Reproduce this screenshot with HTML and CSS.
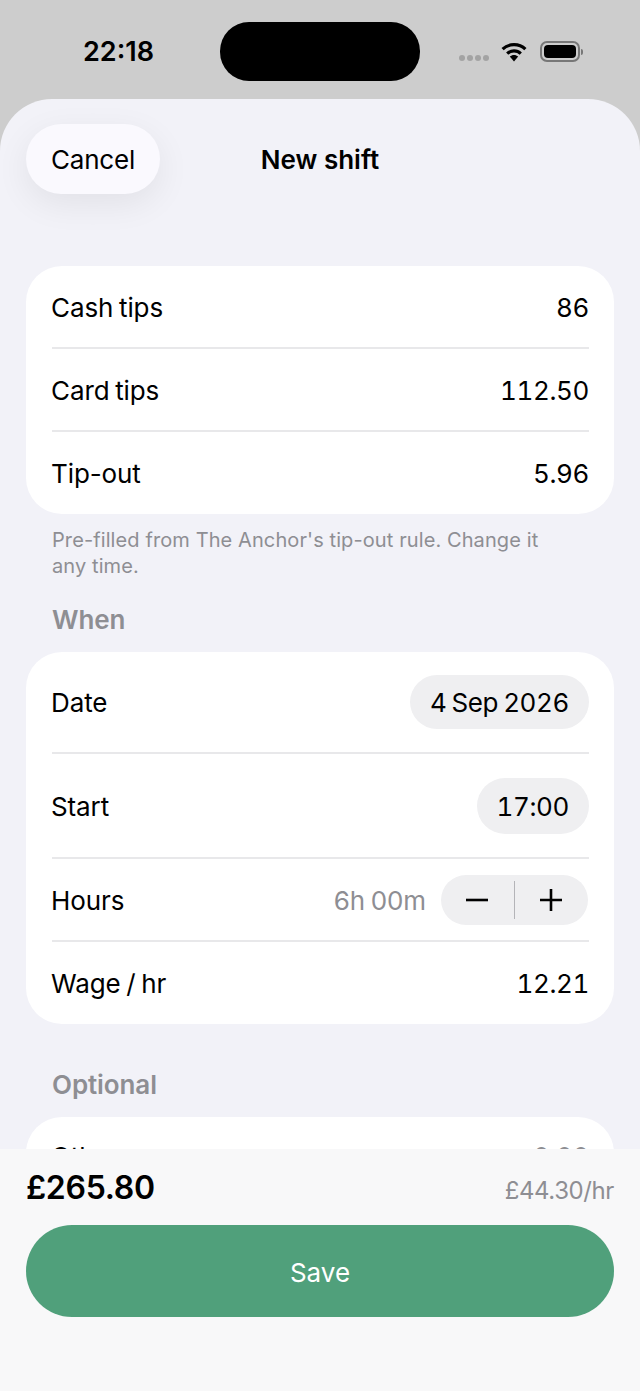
FILE: index.html
```html
<!DOCTYPE html>
<html lang="en">
<head>
    <meta charset="UTF-8">
    <meta name="viewport" content="width=device-width, initial-scale=1.0">
    <title>New shift</title>
    <link rel="stylesheet" href="styles.css">
</head>
<body>
    <div class="status-bar">
        <div class="status-time">22:18</div>
        <div class="island"></div>
        <div class="status-icons">
            <div class="signal-dots"><span></span><span></span><span></span><span></span></div>
            <svg class="wifi" width="26" height="20" viewBox="0 0 26 20">
                <path d="M1.6 7.2C7.8 1.2 18.2 1.2 24.4 7.2" fill="none" stroke="#000" stroke-width="3.2"/>
                <path d="M6.2 11.6C10 8 16 8 19.8 11.6" fill="none" stroke="#000" stroke-width="3.2"/>
                <path d="M8.8 14.6C11.2 12.4 14.8 12.4 17.2 14.6L13 19.6Z" fill="#000"/>
            </svg>
            <div class="battery"><div class="battery-fill"></div></div>
            <div class="battery-cap"></div>
        </div>
    </div>

    <div class="sheet">
        <div class="sheet-scroll">
            <div class="sheet-header">
                <button class="cancel-button">Cancel</button>
                <h1>New shift</h1>
            </div>

            <div class="card">
                <div class="row"><span class="label">Cash tips</span><span class="num">86</span></div>
                <div class="row"><span class="label">Card tips</span><span class="num">112.50</span></div>
                <div class="row"><span class="label">Tip-out</span><span class="num">5.96</span></div>
            </div>
            <p class="footnote">Pre-filled from The Anchor's tip-out rule. Change it any time.</p>

            <h2 class="section-title">When</h2>
            <div class="card">
                <div class="row row-date"><span class="label">Date</span><span class="pill pill-date num">4 Sep 2026</span></div>
                <div class="row row-start"><span class="label">Start</span><span class="pill pill-start num">17:00</span></div>
                <div class="row">
                    <span class="label">Hours</span>
                    <div class="hours-value">
                        <span class="muted">6h 00m</span>
                        <div class="stepper">
                            <svg class="stepper-side" width="73" height="50" viewBox="0 0 73 50"><path d="M25 25H47" stroke="#000" stroke-width="2.6"/></svg>
                            <div class="stepper-divider"></div>
                            <svg class="stepper-side" width="73" height="50" viewBox="0 0 73 50"><path d="M25 25H47M36 14V36" stroke="#000" stroke-width="2.6"/></svg>
                        </div>
                    </div>
                </div>
                <div class="row"><span class="label">Wage / hr</span><span class="num">12.21</span></div>
            </div>

            <h2 class="section-title section-title-optional">Optional</h2>
            <div class="card">
                <div class="row row-clipped"><span class="label">Other</span><span class="muted num">0.00</span></div>
            </div>
        </div>

        <div class="footer">
            <div class="totals">
                <span class="total">£265.80</span>
                <span class="rate">£44.30/hr</span>
            </div>
            <button class="save-button">Save</button>
        </div>
    </div>
</body>
</html>
```

FILE: styles.css
```css
* {
    margin: 0;
    padding: 0;
    box-sizing: border-box;
}

body {
    font-family: Inter, 'Liberation Sans', sans-serif;
    background: #cdcdcd;
    color: #000;
    height: 1391px;
    display: flex;
    flex-direction: column;
    overflow: hidden;
}

.status-bar {
    height: 99px;
    flex-shrink: 0;
    display: flex;
    align-items: flex-start;
    padding-top: 22px;
}

.status-time {
    width: 220px;
    padding-left: 83px;
    padding-top: 14px;
    font-size: 27px;
    font-weight: 600;
    line-height: 32px;
}

.island {
    width: 200px;
    height: 59px;
    background: #000;
    border-radius: 29px;
}

.status-icons {
    display: flex;
    align-items: center;
    padding-left: 39px;
    padding-top: 19px;
}

.signal-dots {
    display: flex;
    gap: 2px;
    margin-top: 13px;
    margin-right: 12px;
}

.signal-dots span {
    width: 6px;
    height: 6px;
    border-radius: 50%;
    background: #a3a3a3;
}

.wifi {
    margin-right: 13px;
}

.battery {
    width: 40px;
    height: 21px;
    border: 2px solid #777;
    border-radius: 7px;
    padding: 2px;
}

.battery-fill {
    height: 100%;
    background: #000;
    border-radius: 4px;
}

.battery-cap {
    width: 2px;
    height: 6px;
    margin-left: 1px;
    background: #777;
    border-radius: 0 2px 2px 0;
}

.sheet {
    flex: 1;
    min-height: 0;
    display: flex;
    flex-direction: column;
    background: #f2f2f8;
    border-radius: 52px 52px 0 0;
    overflow: hidden;
}

.sheet-scroll {
    flex: 1;
    min-height: 0;
    overflow: hidden;
    padding: 25px 26px 0;
}

.sheet-header {
    position: relative;
    height: 70px;
    margin-bottom: 72px;
    display: flex;
    align-items: center;
    justify-content: center;
}

.sheet-header h1 {
    font-size: 26px;
    font-weight: 600;
}

.cancel-button {
    position: absolute;
    left: 0;
    top: 0;
    width: 134px;
    height: 70px;
    border: none;
    border-radius: 35px;
    background: #faf9fe;
    box-shadow: 0 10px 34px rgba(0, 0, 0, 0.07);
    font-family: inherit;
    font-size: 26px;
    letter-spacing: -0.2px;
    color: #000;
}

.card {
    background: white;
    border-radius: 36px;
    padding: 0 25px 0 26px;
}

.row {
    height: 83px;
    padding-top: 2px;
    display: flex;
    align-items: center;
    justify-content: space-between;
    border-bottom: 2px solid #e8e8ea;
    font-size: 26px;
    letter-spacing: -0.1px;
    word-spacing: -1.5px;
}

.row:last-child {
    border-bottom: none;
    height: 82px;
    padding-top: 0;
}

.row-date {
    height: 102px;
    padding-top: 0;
}

.row-start {
    height: 105px;
}

/* only the tops of this row show above the footer */
.row-clipped {
    padding-bottom: 4px;
}

.label {
    margin-left: -1px;
}

.num {
    font-feature-settings: "tnum";
    letter-spacing: -0.4px;
}

.pill {
    display: flex;
    align-items: center;
    background: #efeff1;
    border-radius: 28px;
    padding: 0 20px;
}

.pill-date {
    height: 54px;
}

.pill-start {
    height: 56px;
    padding-top: 2px;
    margin-bottom: 2px;
}

.footnote {
    margin: 13px 60px 0 26px;
    font-size: 20px;
    line-height: 26px;
    letter-spacing: 0.1px;
    color: #8e8e93;
}

.section-title {
    margin: 24px 26px 0;
    height: 49px;
    font-size: 26px;
    font-weight: 600;
    line-height: 34px;
    letter-spacing: -0.1px;
    color: #8e8e93;
}

.section-title-optional {
    margin-top: 44px;
    height: 49px;
}

.hours-value {
    display: flex;
    align-items: center;
    gap: 15px;
}

.muted {
    color: #8e8e93;
}

.stepper {
    width: 147px;
    height: 50px;
    margin-right: 1px;
    margin-bottom: 2px;
    display: flex;
    align-items: center;
    background: #efeff1;
    border-radius: 25px;
}

.stepper-divider {
    width: 1px;
    height: 38px;
    background: #b4b4b8;
}

.footer {
    height: 242px;
    flex-shrink: 0;
    padding: 18px 26px 0;
    background: #f8f8f9;
}

.totals {
    display: flex;
    align-items: center;
    justify-content: space-between;
    height: 40px;
    margin-bottom: 18px;
}

.total {
    font-size: 32px;
    font-weight: 600;
    letter-spacing: -0.3px;
}

.rate {
    font-size: 24px;
    letter-spacing: -0.4px;
    color: #8e8e93;
    margin-top: 6px;
}

.save-button {
    display: block;
    width: 100%;
    height: 92px;
    padding-top: 2px;
    border: none;
    border-radius: 46px;
    background: #50a07b;
    color: white;
    font-family: inherit;
    font-size: 26px;
}
```
